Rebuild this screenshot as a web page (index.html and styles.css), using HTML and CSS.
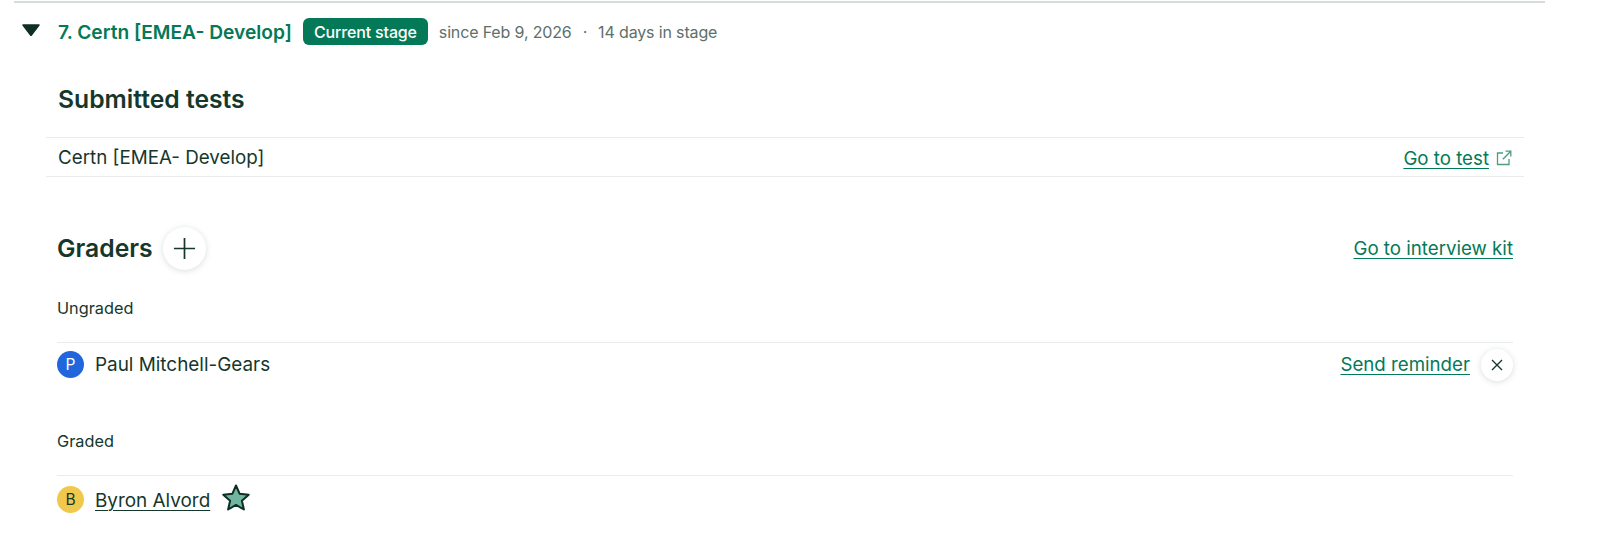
FILE: index.html
```html
<!DOCTYPE html>
<html lang="en">
<head>
<meta charset="utf-8">
<title>Certn stage</title>
<link rel="stylesheet" href="styles.css">
</head>
<body>
<section class="stage">
  <header class="stage-head">
    <svg class="caret" viewBox="0 0 18 12" aria-hidden="true"><path d="M1 1h16L9 11.500z" stroke="#0f2f26" stroke-width="1.500" stroke-linejoin="round" fill="#0f2f26"/></svg>
    <span class="stage-title">7. Certn [EMEA- Develop]</span>
    <span class="badge">Current stage</span>
    <span class="meta">since Feb 9, 2026</span>
    <span class="meta dot">·</span>
    <span class="meta">14 days in stage</span>
  </header>

  <h2 class="heading tests-heading">Submitted tests</h2>
  <div class="test-row">
    <span>Certn [EMEA- Develop]</span>
    <a class="link ext" href="#">
      <span class="u">Go to test</span>
      <svg class="ext-icon" viewBox="0 0 16 16" aria-hidden="true"><path d="M7 3H1.500v11.500H13V9M9.500 1.200h5.300v5.300M14.800 1.200 6.800 9.200" fill="none" stroke="#4f9c80" stroke-width="1.300"/></svg>
    </a>
  </div>

  <div class="graders">
    <div class="graders-head">
      <h2 class="heading">Graders</h2>
      <button class="round plus" aria-label="Add grader">
        <svg viewBox="0 0 24 24" aria-hidden="true"><path d="M12 1v22M1 12h22" stroke="#15372c" stroke-width="1.800" fill="none"/></svg>
      </button>
      <a class="link push u" href="#">Go to interview kit</a>
    </div>

    <div class="group-label first">Ungraded</div>
    <div class="person-row">
      <span class="avatar blue">P</span>
      <span class="name">Paul Mitchell-Gears</span>
      <a class="link push u" href="#">Send reminder</a>
      <button class="round close" aria-label="Remove">
        <svg viewBox="0 0 12 12" aria-hidden="true"><path d="M1 1l10 10M11 1 1 11" stroke="#15372c" stroke-width="1.400" fill="none"/></svg>
      </button>
    </div>

    <div class="group-label second">Graded</div>
    <div class="person-row graded">
      <span class="avatar yellow">B</span>
      <a class="name u dark" href="#">Byron Alvord</a>
      <svg class="star" viewBox="0 0 30 30" aria-hidden="true"><path d="M15 2.500l3.700 8.300 9 .9-6.800 6 2 8.800-7.900-4.600-7.900 4.600 2-8.800-6.800-6 9-.9z" fill="#6fb5a0" stroke="#0f2f26" stroke-width="2" stroke-linejoin="round"/></svg>
    </div>
  </div>
</section>
</body>
</html>
```
FILE: styles.css
```css
* { box-sizing: border-box; }
html, body { margin: 0; background: #fff; }
body {
  font-family: Inter, "Liberation Sans", sans-serif;
  color: #15372c;
  height: 546px;
  overflow: hidden;
  padding: 1px 55px 0 14px;
}
.stage { border-top: 2px solid #d5dcd9; }
.stage-head {
  display: flex;
  align-items: center;
  height: 27px;
  margin-top: 15px;
  padding-left: 8px;
}
.caret { width: 18px; height: 12px; margin: -4px 18px 0 0; }
.stage-title { color: #047957; font-weight: 600; font-size: 19.200px; margin-right: 11px; }
.badge {
  display: flex;
  align-items: center;
  height: 27px;
  padding: 0 11px;
  background: #047957;
  color: #fff;
  font-size: 16px;
  font-weight: 500;
  border-radius: 6px;
  letter-spacing: -.15px;
  margin-right: 11px;
}
.meta { color: #5d7069; font-size: 16px; letter-spacing: -.15px; }
.dot { margin: 0 11px; }
.heading { margin: 0; font-size: 24.700px; font-weight: 600; line-height: 28px; color: #15372c; }
.tests-heading { margin: 40px 0 0 44px; }
.test-row {
  margin: 24px 21px 0 32px;
  height: 40px;
  border-top: 1px solid #e8eceb;
  border-bottom: 1px solid #e8eceb;
  display: flex;
  align-items: center;
  justify-content: space-between;
  padding: 0 12px;
  font-size: 18.800px;
}
.link { color: #047957; font-size: 18.700px; }
.u { text-decoration: underline; text-underline-offset: 3px; text-decoration-thickness: 1px; }
.ext { display: flex; align-items: center; gap: 7px; text-decoration: none; padding-top: 2px; }
.ext-icon { width: 16px; height: 16px; }
.graders { margin: 49px 32px 0 43px; }
.graders-head { display: flex; align-items: center; height: 44px; }
.round {
  border: 0;
  padding: 0;
  background: #fff;
  border-radius: 50%;
  display: flex;
  align-items: center;
  justify-content: center;
  box-shadow: 0 1px 6px rgba(21, 55, 44, .16);
}
.plus { width: 43px; height: 43px; margin-left: 10px; }
.plus svg { width: 23px; height: 23px; }
.push { margin-left: auto; }
.group-label { font-size: 16.300px; line-height: 20px; color: #15372c; }
.group-label.first { margin-top: 28px; }
.group-label.second { margin-top: 45px; }
.person-row {
  display: flex;
  align-items: center;
  height: 44px;
  margin-top: 24px;
  border-top: 1px solid #e8eceb;
}
.person-row.graded { padding-top: 4px; }
.avatar {
  width: 27px;
  height: 27px;
  border-radius: 50%;
  display: flex;
  align-items: center;
  justify-content: center;
  font-size: 15.500px;
  margin-right: 11px;
}
.blue { background: #2266dd; color: #fff; }
.yellow { background: #f0c94c; color: #15372c; }
.name { font-size: 18.900px; }
.dark { color: #15372c; margin-top: 2px; }
.close { width: 32px; height: 32px; margin-left: 11px; }
.close svg { width: 12px; height: 12px; }
.star { width: 30px; height: 30px; margin-left: 11px; margin-top: -3px; }
```
